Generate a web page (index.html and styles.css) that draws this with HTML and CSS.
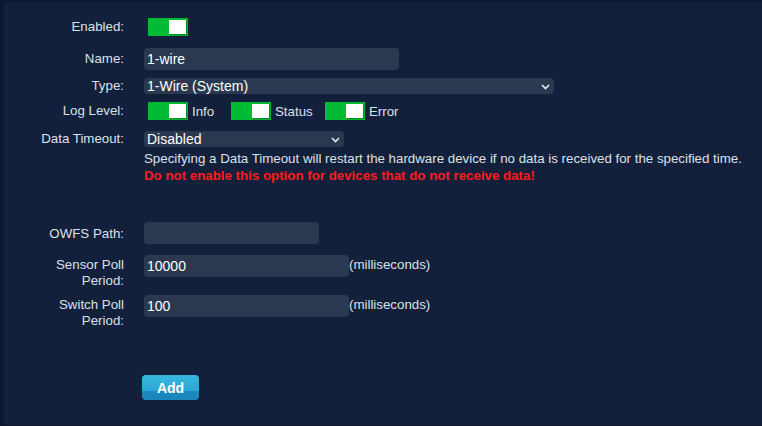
FILE: index.html
```html
<!DOCTYPE html>
<html>
<head>
<meta charset="utf-8">
<link rel="stylesheet" href="styles.css">
</head>
<body>
<div class="page">
  <form class="form">
    <div class="row row-enabled">
      <div class="label">Enabled:</div>
      <div class="field"><span class="toggle"><span class="knob"></span></span></div>
    </div>
    <div class="row row-name">
      <div class="label">Name:</div>
      <div class="field"><div class="input w-name">1-wire</div></div>
    </div>
    <div class="row row-type">
      <div class="label">Type:</div>
      <div class="field"><div class="select w-type"><span>1-Wire (System)</span><svg class="chev" width="9" height="6" viewBox="0 0 9 6"><path d="M1 1l3.5 3.5L8 1" fill="none" stroke="#e6e9ee" stroke-width="1.6"/></svg></div></div>
    </div>
    <div class="row row-log">
      <div class="label">Log Level:</div>
      <div class="field levels">
        <span class="level"><span class="toggle"><span class="knob"></span></span><span class="lvl-text">Info</span></span>
        <span class="level"><span class="toggle"><span class="knob"></span></span><span class="lvl-text">Status</span></span>
        <span class="level"><span class="toggle"><span class="knob"></span></span><span class="lvl-text">Error</span></span>
      </div>
    </div>
    <div class="row row-timeout">
      <div class="label">Data Timeout:</div>
      <div class="field column">
        <div class="select w-timeout"><span>Disabled</span><svg class="chev" width="9" height="6" viewBox="0 0 9 6"><path d="M1 1l3.5 3.5L8 1" fill="none" stroke="#e6e9ee" stroke-width="1.6"/></svg></div>
        <div class="help">Specifying a Data Timeout will restart the hardware device if no data is received for the specified time.</div>
        <div class="warn">Do not enable this option for devices that do not receive data!</div>
      </div>
    </div>
    <div class="row row-owfs">
      <div class="label">OWFS Path:</div>
      <div class="field"><div class="input w-owfs"></div></div>
    </div>
    <div class="row row-sensor">
      <div class="label two">Sensor Poll<br>Period:</div>
      <div class="field top"><div class="input w-poll">10000</div><span class="unit">(milliseconds)</span></div>
    </div>
    <div class="row row-switch">
      <div class="label two">Switch Poll<br>Period:</div>
      <div class="field top"><div class="input w-poll">100</div><span class="unit">(milliseconds)</span></div>
    </div>
    <div class="row row-btn">
      <div class="label"></div>
      <div class="field"><button type="button" class="btn">Add</button></div>
    </div>
  </form>
</div>
</body>
</html>
```

FILE: styles.css
```css
* { box-sizing: border-box; }
html, body { margin: 0; padding: 0; }
body {
  width: 762px;
  height: 426px;
  background: #0d1730;
  font-family: "Liberation Sans", Arial, sans-serif;
  font-size: 13.3px;
  color: #dde1e7;
  overflow: hidden;
}
.page {
  margin-left: 4px;
  margin-top: 2px;
  height: 423px;
  background: #12203c;
  padding-top: 16px;
}
.form { display: flex; flex-direction: column; }
.row { display: flex; align-items: center; }
.label {
  width: 120px;
  flex: none;
  text-align: right;
  color: #dde1e7;
  line-height: 16px;
}
.field { margin-left: 20px; display: flex; align-items: center; }
.field.column { flex-direction: column; align-items: flex-start; }
.field.top { align-items: flex-start; }

.toggle {
  display: inline-block;
  position: relative;
  width: 40px;
  height: 18px;
  background: #00bb33;
  margin-left: 4px;
}
.knob {
  position: absolute;
  right: 2px;
  top: 2px;
  width: 17px;
  height: 14px;
  background: #ffffff;
  box-shadow: 1px 1px 1px rgba(0,0,0,0.25);
}
.input, .select {
  background: #2a3850;
  border-radius: 4px;
  color: #ffffff;
  font-size: 14px;
  padding-left: 3px;
  display: flex;
  align-items: center;
}
.input { height: 22px; }
.select { height: 16px; justify-content: space-between; padding-right: 4px; }
.chev { margin-top: 1px; }
.w-name { width: 255px; }
.w-type { width: 410px; }
.w-timeout { width: 200px; }
.w-owfs { width: 175px; }
.w-poll { width: 205px; }

.row-enabled { height: 18px; }
.row-name { margin-top: 12px; }
.row-type { margin-top: 8px; }
.row-log { margin-top: 8px; }
.level { display: flex; align-items: center; }
.lvl-text { margin-left: 4px; color: #dde1e7; }
.level:nth-child(1) .lvl-text { width: 35px; }
.level:nth-child(2) .lvl-text { width: 46px; }

.row-timeout { margin-top: 11px; align-items: flex-start; }
.help { margin-top: 3px; line-height: 17px; color: #dde1e7; }
.warn { color: #ff1a1a; font-weight: bold; line-height: 17px; }

.row-owfs { margin-top: 38px; }
.row-owfs .label { margin-top: 2px; }
.row-sensor { margin-top: 11px; align-items: flex-start; }
.row-sensor .label, .row-switch .label { margin-top: 2px; }
.row-switch { margin-top: 6px; align-items: flex-start; }
.unit { line-height: 16px; margin-top: 2px; color: #dde1e7; }

.row-btn { margin-top: 46px; }
.row-btn .field { margin-left: 18px; }
.btn {
  width: 57px;
  height: 25px;
  border: none;
  border-radius: 4px;
  background: linear-gradient(#38b8de 0%, #2aa6d4 65%, #1b89bd 66%, #1a86bb 100%);
  color: #ffffff;
  font-family: "Liberation Sans", Arial, sans-serif;
  font-weight: bold;
  font-size: 14px;
  padding: 0;
}
```
